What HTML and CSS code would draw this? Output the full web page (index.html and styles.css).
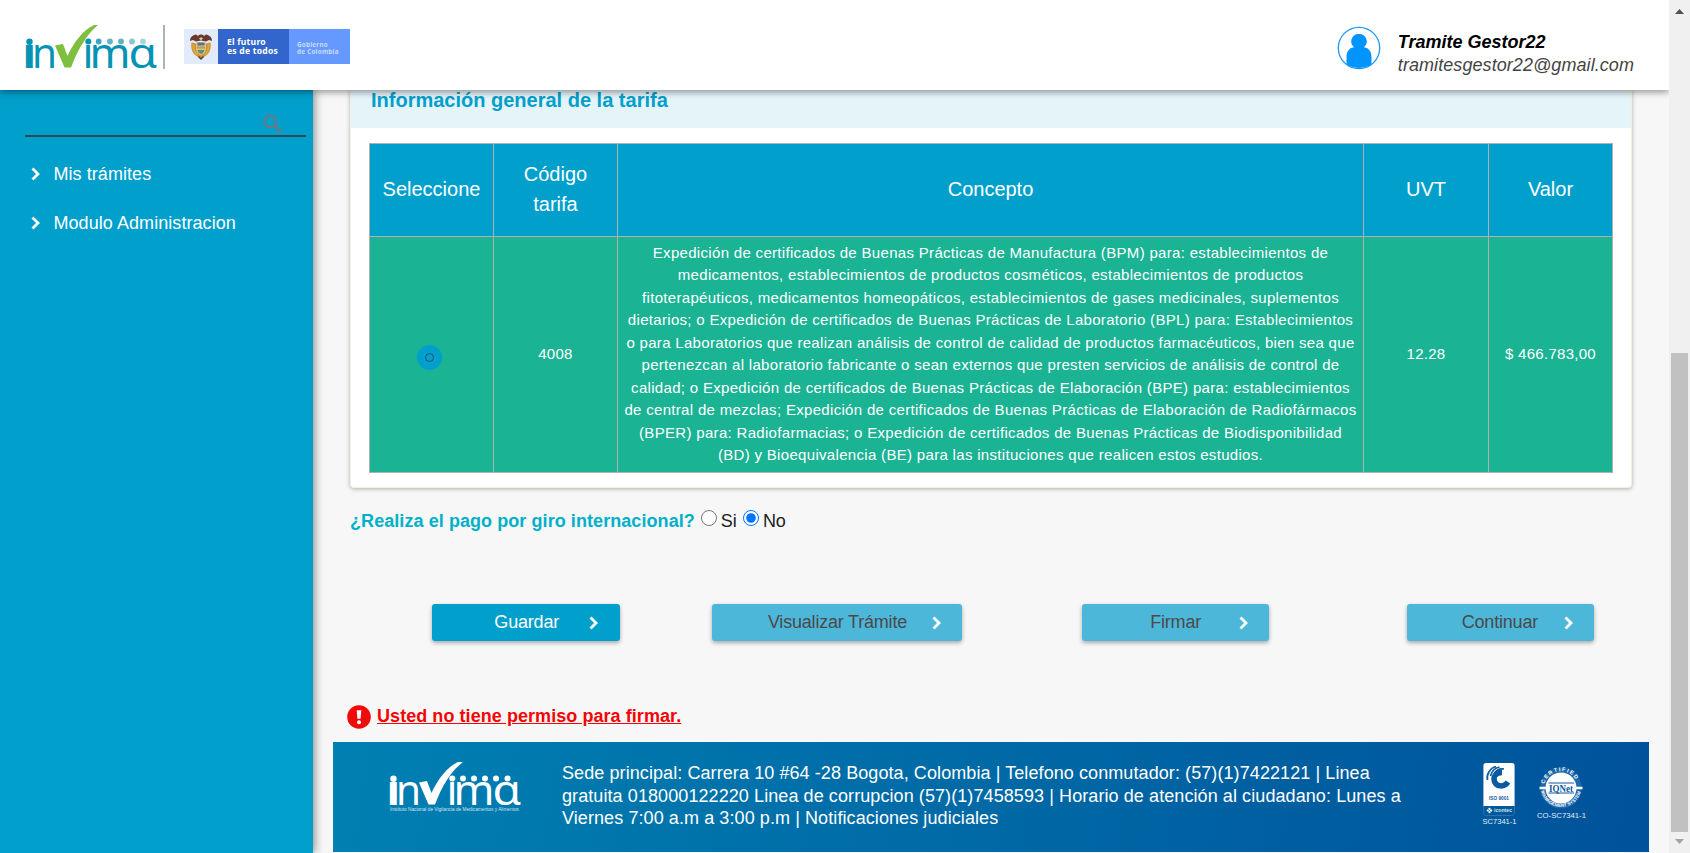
FILE: index.html
```html
<!DOCTYPE html>
<html lang="es">
<head>
<meta charset="utf-8">
<title>Invima - Trámites</title>
<link rel="stylesheet" href="styles.css">
</head>
<body>
<div class="page">
  <header class="topbar">
    <svg class="logo" width="138" height="70" viewBox="-4 -12 138 70">
      <g font-family="Noto Sans" font-size="41" fill="#0493b4">
        <text x="-2.500" y="42.700" font-weight="900" textLength="11.500" lengthAdjust="spacingAndGlyphs">ı</text>
        <text x="6" y="42.700" textLength="25" lengthAdjust="spacingAndGlyphs">n</text>
        <text x="56.500" y="42.700" textLength="11" lengthAdjust="spacingAndGlyphs">ı</text>
        <text x="63.500" y="42.700" textLength="41" lengthAdjust="spacingAndGlyphs">m</text>
        <text x="102.500" y="42.700" textLength="28.500" lengthAdjust="spacingAndGlyphs">ɑ</text>
      </g>
      <path d="M29 20.500l8-1.500 4.500 12C48 17 57 5 68 0h4C61 9 52 24 45 42.500h-6.500z" fill="#7fbf3f"/>
      <circle cx="3.500" cy="16.800" r="3.200" fill="#0493b4"/>
      <circle cx="62.300" cy="16.500" r="3" fill="#0493b4"/>
      <circle cx="72.700" cy="16.500" r="2.900" fill="#3fa5bd"/>
      <circle cx="84" cy="16.500" r="2.900" fill="#62b3c6"/>
      <circle cx="95" cy="16.500" r="2.900" fill="#64aebf"/>
      <circle cx="106" cy="16.500" r="2.900" fill="#8cc5d2"/>
      <circle cx="117" cy="16.500" r="2.900" fill="#a9d4de"/>
    </svg>
    <span class="rule"></span>
    <div class="gov">
      <div class="gov-arms">
        <svg width="24" height="28" viewBox="0 0 24 28">
          <path d="M1 8C1 4 4 2 7 1.500l2 1.500c1-2 5-2 6 0l2-1.500C20 2 23 4 23 8l-3-1-3 1.500-5-1-5 1L4 7z" fill="#6b3a2c"/>
          <path d="M2.500 9.500c-1 6 1 11 5 13.500l4.500 2.500 4.500-2.500c4-2.500 6-7.500 5-13.500L17 10.500H7z" fill="#c98f3c"/>
          <path d="M7 9.500h10v6c0 3.500-2.500 5.500-5 7-2.500-1.500-5-3.500-5-7z" fill="#e3c07a"/>
          <path d="M8.500 9.500h7v3h-7z" fill="#5d7184"/>
          <path d="M8 13.500h8v2H8z" fill="#a9a06a"/>
          <path d="M8.500 17h7c-.5 2-1.500 3-3.500 4-2-1-3-2-3.500-4z" fill="#5f8d80"/>
          <path d="M4.500 11c-.5 5 1 8.500 4 11M19.500 11c.5 5-1 8.500-4 11" fill="none" stroke="#d9a93a" stroke-width="2"/>
          <path d="M10 5.500c.5-1.500 3.500-1.500 4 0l-2 2z" fill="#d9c7b4"/>
          <path d="M9.500 23.500l2.500 2.500 2.500-2.500" fill="none" stroke="#5c4033" stroke-width="1.500"/>
        </svg>
      </div>
      <div class="gov-future">El futuro<br>es de todos</div>
      <div class="gov-name">Gobierno<br>de Colombia</div>
    </div>
    <div class="user">
      <svg width="44" height="44" viewBox="0 0 44 44">
        <circle cx="22" cy="22" r="20.700" fill="#fff" stroke="#1a97fb" stroke-width="1.300"/>
        <path d="M22 8a7.500 7.500 0 0 1 5 13.300c5 .7 7.500 4.500 7.500 9.500v7.500c-7 5-18 5-25 0v-7.500c0-5 2.500-8.800 7.500-9.500A7.500 7.500 0 0 1 22 8z" fill="#0094ff"/>
      </svg>
      <div class="user-text"><strong>Tramite Gestor22</strong><span>tramitesgestor22@gmail.com</span></div>
    </div>
  </header>

  <nav class="sidebar">
    <div class="search">
      <svg width="20" height="20" viewBox="0 0 20 20"><circle cx="7.300" cy="7.300" r="5.900" fill="none" stroke="#6f787c" stroke-width="2"/><path d="M11.700 11.700l6.800 6.800" stroke="#6f787c" stroke-width="2.400"/></svg>
    </div>
    <a class="nav-item"><svg class="chev" width="9" height="14" viewBox="0 0 9 14"><path d="M1.500 1.500L7 7l-5.500 5.500"/></svg>Mis trámites</a>
    <a class="nav-item"><svg class="chev" width="9" height="14" viewBox="0 0 9 14"><path d="M1.500 1.500L7 7l-5.500 5.500"/></svg>Modulo Administracion</a>
  </nav>

  <main class="main">
    <section class="card">
      <h2 class="card-title">Información general de la tarifa</h2>
      <table class="fees">
        <colgroup><col class="c-side"><col class="c-side"><col class="c-mid"><col class="c-end"><col class="c-side"></colgroup>
        <thead><tr><th>Seleccione</th><th>Código tarifa</th><th>Concepto</th><th>UVT</th><th>Valor</th></tr></thead>
        <tbody><tr>
          <td><span class="pick"><span class="pick-ring"></span></span></td>
          <td>4008</td>
          <td class="concept">Expedición de certificados de Buenas Prácticas de Manufactura (BPM) para: establecimientos de<br>medicamentos, establecimientos de productos cosméticos, establecimientos de productos<br>fitoterapéuticos, medicamentos homeopáticos, establecimientos de gases medicinales, suplementos<br>dietarios; o Expedición de certificados de Buenas Prácticas de Laboratorio (BPL) para: Establecimientos<br>o para Laboratorios que realizan análisis de control de calidad de productos farmacéuticos, bien sea que<br>pertenezcan al laboratorio fabricante o sean externos que presten servicios de análisis de control de<br>calidad; o Expedición de certificados de Buenas Prácticas de Elaboración (BPE) para: establecimientos<br>de central de mezclas; Expedición de certificados de Buenas Prácticas de Elaboración de Radiofármacos<br>(BPER) para: Radiofarmacias; o Expedición de certificados de Buenas Prácticas de Biodisponibilidad<br>(BD) y Bioequivalencia (BE) para las instituciones que realicen estos estudios.</td>
          <td>12.28</td>
          <td>$ 466.783,00</td>
        </tr></tbody>
      </table>
    </section>

    <div class="question">
      <span class="question-label">¿Realiza el pago por giro internacional?</span>
      <input class="radio" type="radio" name="giro"><label class="opt opt-si">Si</label>
      <input class="radio" type="radio" name="giro" checked><label class="opt">No</label>
    </div>

    <div class="actions">
      <button class="btn btn-save"><span>Guardar</span><svg class="chev" width="9" height="14" viewBox="0 0 9 14"><path d="M1.500 1.500L7 7l-5.500 5.500"/></svg></button>
      <button class="btn btn-view off"><span>Visualizar Trámite</span><svg class="chev" width="9" height="14" viewBox="0 0 9 14"><path d="M1.500 1.500L7 7l-5.500 5.500"/></svg></button>
      <button class="btn btn-sign off"><span>Firmar</span><svg class="chev" width="9" height="14" viewBox="0 0 9 14"><path d="M1.500 1.500L7 7l-5.500 5.500"/></svg></button>
      <button class="btn btn-next off"><span>Continuar</span><svg class="chev" width="9" height="14" viewBox="0 0 9 14"><path d="M1.500 1.500L7 7l-5.500 5.500"/></svg></button>
    </div>

    <div class="alert">
      <svg width="24" height="24" viewBox="0 0 24 24"><circle cx="12" cy="12" r="11.800" fill="#f00a0a"/><path d="M9.700 5.200h4.600l-.7 8.600h-3.200z" fill="#fff"/><circle cx="12" cy="17.300" r="2" fill="#fff"/></svg>
      <span class="alert-text">Usted no tiene permiso para firmar.</span>
    </div>

    <footer class="footer">
      <svg class="foot-logo" width="138" height="70" viewBox="-4 -12 138 70">
        <g font-family="Noto Sans" font-size="41" fill="#fff">
          <text x="-2.500" y="42.700" font-weight="900" textLength="11.500" lengthAdjust="spacingAndGlyphs">ı</text>
          <text x="6" y="42.700" textLength="25" lengthAdjust="spacingAndGlyphs">n</text>
          <text x="56.500" y="42.700" textLength="11" lengthAdjust="spacingAndGlyphs">ı</text>
          <text x="63.500" y="42.700" textLength="41" lengthAdjust="spacingAndGlyphs">m</text>
          <text x="102.500" y="42.700" textLength="28.500" lengthAdjust="spacingAndGlyphs">ɑ</text>
        </g>
        <text x="0" y="49" font-family="Liberation Sans" font-size="5" fill="#cfe4f0" textLength="129" lengthAdjust="spacingAndGlyphs">Instituto Nacional de Vigilancia de Medicamentos y Alimentos</text>
        <g fill="#fff">
          <path d="M29 20.500l8-1.500 4.500 12C48 17 57 5 68 0h5C61 9 52 24 45 42.500h-6.500z"/>
          <circle cx="3.500" cy="16.800" r="3.200"/><circle cx="62.300" cy="16.500" r="3"/><circle cx="73" cy="16.500" r="3"/><circle cx="84" cy="16.500" r="3"/><circle cx="95" cy="16.500" r="3"/><circle cx="106" cy="16.500" r="3"/><circle cx="117.500" cy="16.500" r="3"/>
        </g>
      </svg>
      <p class="foot-text">Sede principal: Carrera 10 #64 -28 Bogota, Colombia | Telefono conmutador: (57)(1)7422121 | Linea<br>gratuita 018000122220 Linea de corrupcion (57)(1)7458593 | Horario de atención al ciudadano: Lunes a<br>Viernes 7:00 a.m a 3:00 p.m | Notificaciones judiciales</p>
      <svg class="seals" width="108" height="66" viewBox="0 0 108 66" font-family="Liberation Sans">
        <rect x="2.500" y="1.500" width="31" height="52" rx="3" fill="none" stroke="#2b72ae" stroke-width="1"/>
        <path d="M5 1h26a2.500 2.500 0 0 1 2.500 2.500V44h-31V3.500A2.500 2.500 0 0 1 5 1z" fill="#fff"/>
        <path d="M21 10.500c-7 0-9 5-7.500 9 2 5.500 10 6 13.500.5" fill="none" stroke="#0a5a9f" stroke-width="5.500"/>
        <path d="M6.500 18C5 13 9 6 15 4.500M9.500 14c1-4 4-8 9-9M13 12c2-4 6-5.500 10-5" fill="none" stroke="#0a5a9f" stroke-width="1.700"/>
        <text x="8" y="38" font-size="5.500" font-weight="700" fill="#0a5a9f" textLength="20" lengthAdjust="spacingAndGlyphs">ISO 9001</text>
        <path d="M8.500 45.500l3 3-3 3-3-3z" fill="#fff"/><path d="M6.800 47l3.500 3.500M10.300 46.500l-3.500 3.500" stroke="#00569b" stroke-width=".6"/>
        <text x="13" y="50" font-size="6" font-weight="700" fill="#d4e4f1" textLength="18" lengthAdjust="spacingAndGlyphs">icontec</text>
        <text x="1.500" y="61.800" font-size="7.500" fill="#e3eef6" textLength="34" lengthAdjust="spacingAndGlyphs">SC7341-1</text>
        <circle cx="80" cy="26" r="18" fill="none" stroke="#1d69aa" stroke-width="5"/>
        <circle cx="80" cy="26" r="15.500" fill="#fff"/>
        <path id="arc-top" d="M63.500 22A17 17 0 0 1 96.500 22" fill="none"/>
        <path id="arc-bot" d="M60 29A20.500 20.500 0 0 0 100 29" fill="none"/>
        <text font-size="5.500" font-weight="700" fill="#fff" textLength="40"><textPath href="#arc-top">CERTIFIED</textPath></text>
        <text font-size="4.600" font-weight="700" fill="#fff" textLength="54"><textPath href="#arc-bot">MANAGEMENT SYSTEM</textPath></text>
        <path d="M58.500 26h43" stroke="#fff" stroke-width="2.400"/>
        <rect x="66" y="20.500" width="28" height="11" fill="#fff"/>
        <path d="M67.500 21h25.500M67.500 31h25.500" stroke="#0a5a9f" stroke-width="1"/>
        <text x="68" y="29.500" font-family="Liberation Serif" font-size="10" font-weight="700" fill="#0a5a9f" textLength="24" lengthAdjust="spacingAndGlyphs">IQNet</text>
        <text x="56" y="55.500" font-size="7.500" fill="#e3eef6" textLength="49" lengthAdjust="spacingAndGlyphs">CO-SC7341-1</text>
      </svg>
    </footer>
  </main>

  <div class="scroll">
    <svg width="9" height="5" viewBox="0 0 9 5"><path d="M0 5L4.500 0 9 5z" fill="#505050"/></svg>
    <div class="thumb"></div>
    <svg width="9" height="5" viewBox="0 0 9 5"><path d="M0 0h9L4.500 5z" fill="#a3a3a3"/></svg>
  </div>
</div>
</body>
</html>
```
FILE: styles.css
```css
* { box-sizing: border-box; }
body { margin: 0; font-family: "Liberation Sans", Arial, sans-serif; font-size: 18px; background: #f7f7f7; overflow: hidden; }
svg { display: block; flex: none; }
.page { display: grid; grid-template-columns: 313px 1356px 21px; grid-template-rows: 90px 763px; height: 853px; overflow: hidden; }

.topbar { grid-column: 1 / 3; grid-row: 1; display: flex; align-items: flex-start; background: #fff; box-shadow: 0 2px 7px rgba(0, 0, 0, .42); position: relative; z-index: 3; clip-path: inset(0 0 -12px 0); }
.logo { margin: 13px 0 0 22px; }
.rule { width: 2px; height: 44px; margin: 25px 0 0 3px; background: #adb2b7; }
.gov { display: flex; height: 35px; margin: 29px 0 0 19px; color: #fff; font-family: "Noto Sans", sans-serif; }
.gov-arms { width: 34px; background: #e1ebfb; padding: 4px 5px; }
.gov-future { width: 71px; background: #3366cc; font-size: 8.600px; line-height: 9px; font-weight: 700; padding: 9px 0 0 9px; letter-spacing: .22px; white-space: nowrap; }
.gov-name { width: 61px; background: #6699ff; font-size: 6.300px; line-height: 7px; font-weight: 700; padding: 12px 0 0 8px; letter-spacing: .25px; color: #c9dbff; white-space: nowrap; }
.user { display: flex; margin: 26px 35px 0 auto; gap: 17px; }
.user-text { display: flex; flex-direction: column; font-style: italic; font-size: 18px; line-height: 23px; padding-top: 5px; letter-spacing: .07px; color: #444; }
.user-text strong { color: #000; letter-spacing: 0; }

.sidebar { grid-column: 1; grid-row: 2; background: #009fcc; color: #fff; box-shadow: 1px 0 9px rgba(0, 0, 0, .5); position: relative; z-index: 1; }
.search { width: 281px; height: 47px; margin: 0 0 12px 25px; border-bottom: 2px solid #2f4858; display: flex; justify-content: flex-end; padding: 24px 23px 0 0; }
.nav-item { display: flex; align-items: center; height: 49px; padding: 1px 0 0 31px; gap: 13.500px; letter-spacing: .06px; }
.chev { fill: none; stroke: #fff; stroke-width: 2.800; }

.main { grid-column: 2; grid-row: 2; background: #f7f7f7; min-width: 0; }
.card { width: 1282px; height: 398px; margin-left: 37px; background: #fff; border: 1px solid #f0f0e0; border-top: 0; border-radius: 0 0 4px 4px; box-shadow: 0 1px 4px rgba(0, 0, 0, .3); }
.card-title { margin: 0; height: 38px; background: #e5f4f9; color: #009fcc; font-size: 20px; line-height: 20px; font-weight: 700; padding-left: 20px; }
.fees { margin: 15px 0 0 18px; width: 1244px; height: 330px; border-collapse: collapse; table-layout: fixed; color: #fff; text-align: center; }
.c-side { width: 124px; }
.c-end { width: 125px; }
.c-mid { width: 746px; }
.fees th, .fees td { border: 1px solid #b0b0b0; padding: 0; }
.fees th { background: #009fcc; height: 93px; font-size: 20px; line-height: 30px; font-weight: 400; padding: 0 10px 2px; }
.fees td { background: #1ab394; font-size: 15px; line-height: 22.500px; letter-spacing: .28px; padding-bottom: 1px; }
.fees td.concept { white-space: nowrap; letter-spacing: .315px; }
.pick { display: inline-flex; width: 25px; height: 25px; margin: 6px 0 0 -4px; border-radius: 50%; background: #009fcc; align-items: center; justify-content: center; }
.pick-ring { width: 9px; height: 9px; border: 1px solid #265066; border-radius: 50%; }

.question { display: flex; align-items: center; margin: 18px 0 0 37px; height: 30px; color: #222; }
.question-label { color: #00b0ca; font-weight: 700; letter-spacing: .07px; }
.radio { width: 16px; height: 16px; margin: -6px 4px 0 6px; }
.opt { font-size: 18px; }

.actions { display: flex; margin: 68px 0 0 119px; }
.btn { height: 37px; border: 0; border-radius: 3px; background: #009fcc; color: #fff; font: 18px "Liberation Sans", Arial, sans-serif; letter-spacing: -.2px; box-shadow: 0 2px 4px rgba(0, 0, 0, .32); display: flex; align-items: center; justify-content: flex-end; padding: 0 21px 0 0; white-space: nowrap; }
.off { background: #4db7d9; color: #4a4a4a; }
.btn-save { width: 188px; gap: 30px; padding-right: 22px; }
.btn-view { width: 250px; margin-left: 92px; gap: 25px; }
.btn-sign { width: 187px; margin-left: 120px; gap: 38px; }
.btn-next { width: 187px; margin-left: 138px; gap: 26px; }

.alert { display: flex; align-items: center; gap: 6px; margin: 64px 0 13px 34px; height: 24px; }
.alert-text { color: #f20505; font-weight: 700; text-decoration: underline; letter-spacing: .06px; margin-top: -1px; }

.footer { width: 1316px; height: 110px; margin-left: 20px; background: linear-gradient(100deg, #0080b2, #00529a); color: #fff; display: flex; align-items: flex-start; }
.foot-logo { margin: 8px 0 0 53px; }
.foot-text { margin: 20px 0 0 38px; width: 880px; font-size: 18px; line-height: 22.500px; letter-spacing: .085px; white-space: nowrap; }
.seals { margin: 20px 0 0 39px; }

.scroll { grid-column: 3; grid-row: 1 / 3; background: #f0f0f0; display: flex; flex-direction: column; align-items: center; padding-top: 9px; }
.thumb { width: 17px; height: 479px; background: #c1c1c1; margin: 339px 0 7px; }
```
